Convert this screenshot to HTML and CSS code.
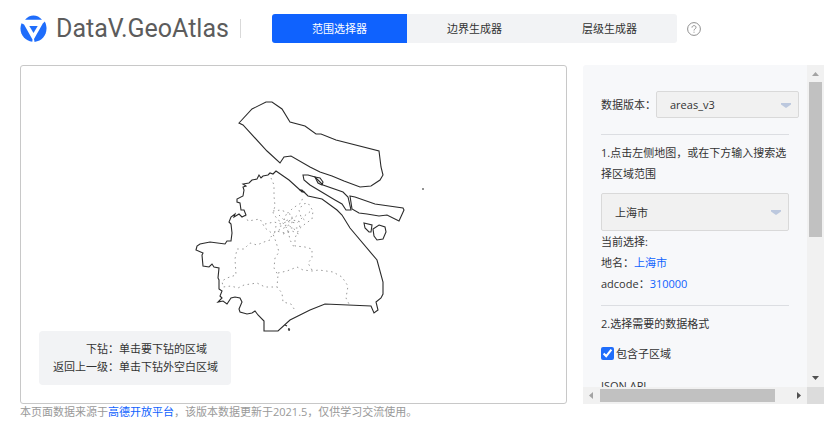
FILE: index.html
```html
<!DOCTYPE html>
<html lang="zh-CN">
<head>
<meta charset="utf-8">
<title>DataV.GeoAtlas</title>
<link rel="stylesheet" href="styles.css">
</head>
<body>
<div class="page">
  <header class="header">
    <a class="brand" href="#">
      <svg class="logo" viewBox="0 0 27 27" aria-hidden="true">
        <path d="M5 4.800C9.500-1 17.500-1 22 4.800Z" fill="#1f6dfb"/>
        <path d="M1.500 8.200 4 9.500 12.500 24.500 12.300 26.800C4 26-2 17.500 1.500 8.200Z" fill="#1f6dfb"/>
        <path d="M24.800 6.500 22.800 8.500 14 24 14.600 26.900C24 26 29.500 16 24.800 6.500Z" fill="#1f6dfb"/>
        <path d="M4.500 7.500H22.500L13.500 23.500Z" fill="#fff"/>
        <path d="M9.300 11H17.700L13.500 18Z" fill="#1f6dfb"/>
      </svg>
      <span class="brand-name">DataV.GeoAtlas</span>
    </a>
    <nav class="tabs">
      <button class="tab tab-active" type="button">范围选择器</button>
      <button class="tab" type="button">边界生成器</button>
      <button class="tab" type="button">层级生成器</button>
    </nav>
    <button class="help" type="button" aria-label="帮助">
      <svg viewBox="0 0 14 14" fill="none" stroke="#8f8f8f">
        <circle cx="7" cy="7" r="6.400"/>
        <path d="M5 5.600C5 3 9 3 9 5.400 9 6.900 7 6.900 7 8.500M7 9.700V10.700"/>
      </svg>
    </button>
  </header>

  <main class="main">
    <section class="map">
      <svg class="map-drawing" viewBox="21 66 545 337" aria-hidden="true">
        <g class="inner-border">
          <path d="M271 178 274 185 274 196 275 206 273 213 278 220 283 223 288 230 290 240 294 247"/>
          <path d="M245 215 248 221 254 220 260 219 265 228 273 234 276 242 279 252 275 258 274 268 278 275 277 287 282 293 283 302 291 304 296 312"/>
          <path d="M270 240 264 242 257 245 250 243 244 249 237 249 235 259 236 275 227 278 222 281 223 287 231 286 238 288 244 285 257 283 265 287 277 287"/>
          <path d="M278 273 287 271 297 267 303 270 312 271 319 270 333 272 342 277 348 286 346 298 349 304"/>
          <path d="M312 270 308 263 312 258 312 249 305 247 295 246 295 238 299 229 305 224 312 219 313 211 308 203 303 204 299 210 301 217 307 222"/>
          <path d="M273 211 281 210 288 213 293 208 301 203 303 197"/>
          <path d="M265 224 274 222 281 224 291 220 299 221 300 228 291 228 285 233 276 231 270 238"/>
          <path d="M274 232 284 228 292 223 292 215 287 213 284 219 289 222 297 223 303 217 311 211"/>
          <path d="M279 215 285 221 294 218 299 214 M275 227 288 225 297 231 M283 234 292 231 299 234"/>
        </g>
        <g class="border">
          <path d="M239 123 252 109 266 102 272 102 282 109 290 122 305 126 316 134 321 134 336 140 379 151 381 167 383 175 380 180 371 186 360 187 344 181 332 176 320 172 310 167 291 156 284 157 280 163 267 151 243 125Z"/>
          <path d="M276 171 289 180 300 190 304 192 308 196 322 199 337 210 342 215 350 228 377 260 383 282 383 294 381 298 376 302 378 310 374 313 371 306 325 304 310 310 290 320 278 331 264 331 264 321 258 315 255 311 252 313 247 314 240 312 239 309 242 302 240 298 235 297 231 298 227 304 223 301 218 302 222 298 220 296 222 291 219 289 219 280 218 278 219 268 214 267 212 264 209 267 203 266 202 255 203 253 196 250 197 246 200 244 210 242 225 244 227 241 231 241 232 233 231 224 229 222 231 217 235 214 234 217 239 214 242 217 246 215 244 210 241 210 240 203 237 202 237 199 243 196 244 190 243 187 246 186 243 184 249 183 252 180 257 179 259 175 261 178 263 176 268 175 270 173 273 174Z"/>
          <path d="M303 175 308 175 315 177 323 185 343 192 348 197 351 210 346 210 342 204 335 200 310 185 304 180Z"/>
          <path d="M315 177 320 178 323 182 322 185 318 183Z"/>
          <path d="M350 196 355 197 375 204 403 208 404 210 399 221 387 215 379 216 367 214 359 213 352 209Z"/>
          <path d="M364 223 372 225 371 232 369 232 365 228Z"/>
          <path d="M379 225 385 227 386 232 383 239 377 240 374 236 373 229Z"/>
          <path d="M300 190 302 190 304 192 302 192Z M285 325 287 326 M288 329 290 330 M289 328 289 331 M422 189H424"/>
        </g>
      </svg>
      <dl class="tips">
        <dt>下钻：</dt><dd>单击要下钻的区域</dd>
        <dt>返回上一级：</dt><dd>单击下钻外空白区域</dd>
      </dl>
    </section>

    <aside class="panel">
      <form class="settings">
        <div class="version">
          <label for="version">数据版本：</label>
          <div class="picker picker-version">
            <select id="version"><option>areas_v3</option></select>
            <svg class="caret" viewBox="0 0 10 6" aria-hidden="true"><path d="M0 1H10V2.500L5 6 0 2.500Z"/></svg>
          </div>
        </div>
        <div class="group">
          <label for="area">1.点击左侧地图，或在下方输入搜索选择区域范围</label>
          <div class="picker picker-area">
            <select id="area"><option>上海市</option></select>
            <svg class="caret" viewBox="0 0 10 6" aria-hidden="true"><path d="M0 1H10V2.500L5 6 0 2.500Z"/></svg>
          </div>
          <p>当前选择:</p>
          <p>地名：<a href="#">上海市</a></p>
          <p>adcode：<a href="#">310000</a></p>
        </div>
        <div class="group">
          <p>2.选择需要的数据格式</p>
          <label class="check"><input type="checkbox" checked>包含子区域</label>
          <p>JSON API</p>
        </div>
      </form>
      <div class="bar bar-vertical">
        <svg class="arrow" viewBox="0 0 17 17"><path d="M5 11H12L8.500 7Z" fill="#a3a3a3"/></svg>
        <div class="thumb"></div>
        <svg class="arrow" viewBox="0 0 17 17"><path d="M5 6H12L8.500 10Z" fill="#505050"/></svg>
      </div>
      <div class="bar bar-horizontal">
        <svg class="arrow" viewBox="0 0 17 17"><path d="M10 5V12L6 8.500Z" fill="#a3a3a3"/></svg>
        <div class="thumb"></div>
        <svg class="arrow" viewBox="0 0 17 17"><path d="M7 5V12L11 8.500Z" fill="#505050"/></svg>
      </div>
      <div class="corner"></div>
    </aside>
  </main>
  <footer class="footer">本页面数据来源于<a href="#">高德开放平台</a>，该版本数据更新于2021.5，仅供学习交流使用。</footer>
</div>
</body>
</html>
```
FILE: styles.css
```css
* {
  box-sizing: border-box;
}

body,
p,
dl,
dd {
  margin: 0;
}

body,
button,
select {
  font-family: "Open Sans", "Noto Sans CJK SC", sans-serif;
  font-size: 11px;
  color: #333;
}

a {
  color: #0f62fe;
  text-decoration: none;
}

.page {
  display: grid;
  grid-template-rows: auto minmax(0, 1fr) auto;
  height: 100vh;
  padding: 0 15px 0 20px;
}

.header {
  display: flex;
  align-items: center;
  height: 65px;
  padding-bottom: 8px;
}

.brand {
  display: flex;
  align-items: center;
  gap: 9px;
  padding-right: 12px;
  color: #5c5c5c;
  position: relative;
}

.brand::after {
  content: "";
  position: absolute;
  right: 0;
  width: 1px;
  height: 19px;
  background: #d9d9d9;
}

.logo {
  width: 27px;
  height: 27px;
}

.brand-name {
  font-family: Roboto, sans-serif;
  font-size: 25px;
  line-height: 28px;
}

.tabs {
  display: flex;
  margin-left: 31px;
  border-radius: 3px;
  overflow: hidden;
}

.tab {
  width: 135px;
  height: 29px;
  padding: 0 0 2px;
  border: 0;
  background: #f2f3f5;
}

.tab-active {
  background: #0f62fe;
  color: #fff;
}

.help {
  display: flex;
  width: 14px;
  margin-left: 10px;
  padding: 0;
  border: 0;
  background: none;
}

.main {
  display: flex;
  gap: 16px;
}

.map {
  flex: 1;
  position: relative;
  border: 1px solid #c8c8c8;
  border-radius: 3px;
}

.map-drawing {
  display: block;
  width: 100%;
  height: 100%;
}

.border {
  fill: none;
  stroke: #2b2b2b;
  stroke-width: 1.1;
}

.inner-border {
  fill: none;
  stroke: #999;
  stroke-dasharray: 1.5 3.5;
}

.tips {
  position: absolute;
  left: 18px;
  bottom: 18px;
  display: grid;
  grid-template-columns: auto auto;
  padding: 9px 13px 9px 14px;
  border-radius: 4px;
  background: #f2f3f5;
  line-height: 18px;
}

.tips dt {
  text-align: right;
}

.panel {
  display: grid;
  grid-template: minmax(0, 1fr) 17px / minmax(0, 1fr) 17px;
  width: 241px;
  border-radius: 3px 0 0;
  overflow: hidden;
  background: #f7f8fa;
}

.settings {
  overflow: hidden;
  padding: 26px 18px 0;
  line-height: 21px;
}

.version {
  display: flex;
  align-items: center;
  width: max-content;
  margin-bottom: 16px;
}

.group {
  padding: 7px 0 11px;
  border-top: 1px solid #dcdee2;
}

.picker {
  position: relative;
}

.picker select {
  display: block;
  width: 100%;
  height: 100%;
  padding: 0 13px;
  border: 1px solid #d9d9d9;
  border-radius: 2px;
  background: #f1f1f1;
  appearance: none;
}

.picker-version {
  width: 143px;
  height: 27px;
}

.picker-area {
  height: 38px;
  margin-top: 9px;
}

.caret {
  position: absolute;
  top: calc(50% - 3px);
  right: 8px;
  width: 10px;
  height: 6px;
  fill: #bcc8de;
}

.check {
  display: flex;
  align-items: center;
  gap: 2px;
  margin: 9px 0 11px;
}

.check input {
  width: 13px;
  height: 13px;
  margin: 0;
  accent-color: #1f6dfb;
}

.bar {
  display: flex;
  background: #f1f1f1;
}

.bar-vertical {
  flex-direction: column;
}

.arrow {
  flex: none;
  width: 17px;
  height: 17px;
}

.thumb {
  background: #c1c1c1;
}

.bar-vertical .thumb {
  height: 48%;
  margin: 0 2px;
}

.bar-horizontal .thumb {
  width: 78%;
  margin: 2px 0;
}

.bar-vertical .thumb + .arrow {
  margin-top: auto;
}

.bar-horizontal .thumb + .arrow {
  margin-left: auto;
}

.corner {
  background: #dcdcdc;
}

.footer {
  height: 23px;
  color: #999;
  line-height: 16px;
}
```
